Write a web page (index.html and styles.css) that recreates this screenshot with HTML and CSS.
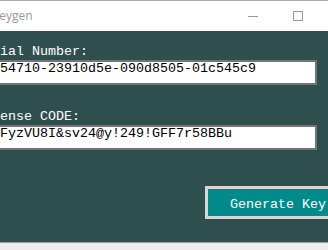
FILE: index.html
```html
<!DOCTYPE html>
<html>
<head>
<meta charset="utf-8">
<link rel="stylesheet" href="styles.css">
</head>
<body>
<div class="window">
  <div class="titlebar">
    <span class="title">Keygen</span>
    <span class="controls">
      <span class="btn-min"></span>
      <span class="btn-max"></span>
    </span>
  </div>
  <div class="content">
    <label class="label">Serial Number:</label>
    <input class="field" type="text" value="54710-23910d5e-090d8505-01c545c9">
    <label class="label second">License CODE:</label>
    <input class="field" type="text" value="FyzVU8I&amp;sv24@y!249!GFF7r58BBu">
    <div class="actions">
      <button class="generate">Generate Key</button>
    </div>
  </div>
</div>
</body>
</html>
```

FILE: styles.css
```css
html, body {
  margin: 0;
  padding: 0;
}
body {
  width: 328px;
  height: 250px;
  overflow: hidden;
  background: linear-gradient(#d9d9d9, #ededed);
}
.window {
  margin-left: -40px;
  width: 400px;
  border-top: 1px solid #acacac;
  border-bottom: 1px solid #9c9c9c;
  background: #2f4f4f;
}
.titlebar {
  height: 30px;
  background: #fff;
  display: flex;
  align-items: center;
  font-family: "Open Sans", "Noto Sans", sans-serif;
  font-size: 12px;
  color: #999;
}
.title {
  padding-left: 32px;
  margin-top: -1px;
}
.controls {
  margin-left: 215px;
  display: flex;
  align-items: center;
  gap: 35px;
}
.btn-min {
  width: 10px;
  height: 1px;
  background: #999;
  margin-top: 1px;
}
.btn-max {
  width: 10px;
  height: 10px;
  box-sizing: border-box;
  border: 1px solid #999;
  margin-top: -1px;
}
.content {
  height: 211px;
  box-sizing: border-box;
  padding: 13px 0 0 16px;
  display: flex;
  flex-direction: column;
  align-items: flex-start;
  font-family: "Liberation Mono", "DejaVu Sans Mono", monospace;
  font-size: 13.33px;
}
.label {
  color: #fff;
  line-height: 16px;
  height: 16px;
}
.label.second {
  margin-top: 24px;
}
.field {
  box-sizing: border-box;
  width: 341px;
  height: 25px;
  margin: 0;
  border: 2px solid #747478;
  padding: 0 0 8px 22px;
  background: #fff;
  color: #000;
  font: inherit;
  line-height: normal;
  outline: none;
}
.actions {
  margin-top: 36px;
  padding-left: 229px;
  display: flex;
}
.generate {
  box-sizing: border-box;
  height: 33px;
  margin: 0;
  border: 3px solid #d6d6d6;
  padding: 4px 22px 0 22px;
  background: #008b8b;
  color: #fff;
  font: inherit;
  white-space: nowrap;
}
```
